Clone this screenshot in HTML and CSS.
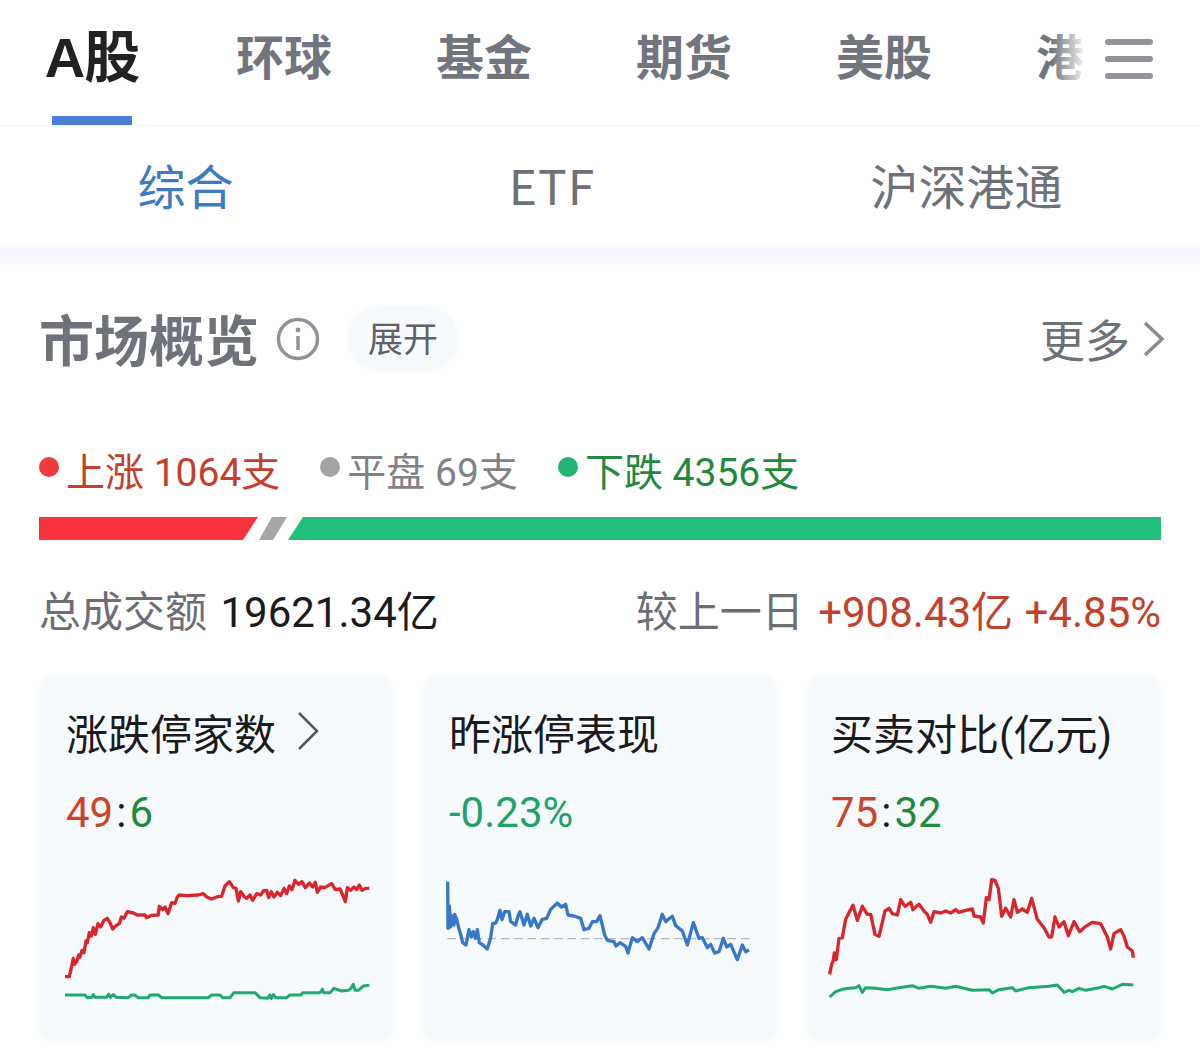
FILE: index.html
```html
<!DOCTYPE html>
<html lang="zh-CN">
<head>
<meta charset="utf-8">
<title>市场概览</title>
<link rel="stylesheet" href="styles.css">
</head>
<body>
<header class="topbar">
  <nav class="tabs">
    <span class="tab tab-active">A股</span>
    <span class="tab">环球</span>
    <span class="tab">基金</span>
    <span class="tab">期货</span>
    <span class="tab">美股</span>
    <span class="tab">港股</span>
  </nav>
  <div class="menu-wrap">
    <svg class="menu-icon" viewBox="0 0 48 40" aria-hidden="true"><rect y="0" width="48" height="6" rx="3"/><rect y="17" width="48" height="6" rx="3"/><rect y="34" width="48" height="6" rx="3"/></svg>
  </div>
</header>
<nav class="subtabs">
  <span class="subtab subtab-active">综合</span>
  <span class="subtab subtab-latin">ETF</span>
  <span class="subtab">沪深港通</span>
</nav>
<div class="band"></div>
<main class="overview">
  <div class="title-row">
    <h1 class="title">市场概览</h1>
    <svg class="info" viewBox="0 0 44 44" aria-hidden="true"><circle cx="22" cy="22" r="19.5"/><circle class="info-dot" cx="22" cy="13" r="2.4"/><path d="M22 19v14"/></svg>
    <span class="pill">展开</span>
    <span class="more">更多<svg class="more-arrow" viewBox="0 0 22 36" aria-hidden="true"><path d="M2 2l17 16L2 34"/></svg></span>
  </div>
  <div class="legend">
    <span class="legend-item up"><i class="dot"></i>上涨 1064支</span>
    <span class="legend-item flat"><i class="dot"></i>平盘 69支</span>
    <span class="legend-item down"><i class="dot"></i>下跌 4356支</span>
  </div>
  <svg class="ratio" viewBox="0 0 1122 23" aria-hidden="true">
    <polygon class="r" points="0,0 219,0 204,23 0,23"/>
    <polygon class="g" points="233,0 248,0 234,23 220,23"/>
    <polygon class="d" points="264,0 1122,0 1122,23 249,23"/>
  </svg>
  <div class="stats">
    <span class="stat-left"><span class="muted">总成交额</span> <span class="amount">19621.34亿</span></span>
    <span class="stat-right"><span class="muted">较上一日</span> <span class="delta">+908.43亿 +4.85%</span></span>
  </div>
  <section class="cards">
    <article class="card card-a">
      <h2 class="card-title">涨跌停家数<svg class="card-arrow" viewBox="0 0 22 40" aria-hidden="true"><path d="M2 2l18 18L2 38"/></svg></h2>
      <p class="card-value"><span class="v-up">49</span><span class="sep">:</span><span class="v-down">6</span></p>
      <svg class="chart" viewBox="90 600 960 420" aria-hidden="true">
        <polyline class="l-red" points="105,917 118,917 124,890 130,862 134,880 140,872 146,852 150,858 156,838 162,845 168,810 172,815 178,785 184,795 190,770 196,790 204,758 212,768 222,748 232,742 240,755 248,774 258,764 268,758 274,738 282,742 292,722 310,726 322,732 345,732 350,740 365,733 385,732 388,706 398,716 405,708 414,728 425,695 435,697 442,678 447,672 470,674 505,672 520,668 530,678 545,684 562,677 575,676 585,645 598,632 610,650 618,652 625,690 632,662 642,676 650,682 660,672 668,688 680,668 692,672 700,660 710,658 716,680 724,662 732,678 742,664 752,674 762,652 770,668 778,645 786,656 795,628 806,640 816,632 826,650 838,636 848,648 856,634 862,664 872,648 884,650 905,638 916,656 930,654 938,672 946,692 952,650 962,658 972,648 980,656 988,642 996,658 1006,652 1018,652"/>
        <polyline class="l-green" points="105,972 165,972 172,980 185,979 190,971 195,979 230,979 236,969 241,979 250,971 258,979 295,980 305,972 314,972 325,980 355,980 360,972 385,972 395,980 535,980 545,972 570,972 578,980 600,980 612,965 675,965 690,980 714,982 719,972 724,982 730,971 737,980 770,980 780,972 812,972 818,965 870,965 877,955 881,965 900,965 912,952 935,960 955,958 963,952 970,940 975,958 985,958 1000,945 1018,943"/>
      </svg>
    </article>
    <article class="card card-b">
      <h2 class="card-title">昨涨停表现</h2>
      <p class="card-value"><span class="v-pct">-0.23%</span></p>
      <svg class="chart" viewBox="90 600 960 420" aria-hidden="true">
        <line class="l-dash" x1="100" y1="803" x2="1010" y2="803"/>
        <polyline class="l-blue" points="101,632 102,772 106,705 110,768 114,735 120,762 122,730 128,745 134,770 140,790 146,815 156,822 165,776 172,798 178,782 184,802 190,776 196,815 204,820 220,834 230,800 236,758 245,756 250,745 258,718 264,746 272,722 285,722 290,752 305,762 312,735 318,722 330,762 340,730 350,765 360,742 372,770 385,745 398,742 410,715 430,696 442,708 455,700 462,732 480,735 500,742 510,776 525,772 535,752 548,752 558,734 572,792 580,808 600,812 606,825 618,815 635,826 642,846 655,800 670,812 685,800 705,834 720,788 732,770 745,730 755,752 764,744 775,736 785,764 805,780 820,822 838,755 855,802 865,800 880,830 890,820 902,846 915,842 928,802 938,828 950,820 970,866 985,822 995,842 1005,837"/>
      </svg>
    </article>
    <article class="card card-c">
      <h2 class="card-title">买卖对比(亿元)</h2>
      <p class="card-value"><span class="v-up">75</span><span class="sep">:</span><span class="v-down">32</span></p>
      <svg class="chart" viewBox="75 600 960 420" aria-hidden="true">
        <polyline class="l-red" points="92,910 98,880 103,868 106,846 112,866 120,802 130,800 140,745 150,725 162,703 175,748 190,706 205,730 215,730 228,790 240,796 258,720 270,712 280,728 295,732 305,686 318,706 335,694 342,716 352,706 360,700 375,720 385,730 395,754 405,722 425,726 440,720 455,726 470,716 480,724 500,718 520,714 525,735 545,738 553,756 562,680 570,686 578,626 588,628 598,652 608,736 620,712 635,738 645,686 655,724 670,714 685,724 698,682 715,745 735,770 750,798 758,798 768,738 780,768 795,752 808,794 825,752 842,782 860,766 880,754 905,758 925,798 935,834 945,788 965,776 975,796 985,828 1000,840 1003,860"/>
        <polyline class="l-green" points="92,978 110,962 130,955 150,952 170,950 180,944 190,964 200,950 230,952 265,956 300,950 340,944 360,952 395,946 440,952 470,946 520,958 570,956 580,966 600,956 640,950 650,960 690,950 750,946 775,942 795,964 810,958 820,962 840,952 860,958 900,950 915,946 940,954 970,940 1003,942"/>
      </svg>
    </article>
  </section>
</main>
</body>
</html>
```
FILE: styles.css
```css
* { box-sizing: border-box; }
html, body { margin: 0; padding: 0; }
body {
  width: 1200px;
  height: 1062px;
  overflow: hidden;
  background: #fff;
  font-family: Roboto, "Noto Sans CJK SC", sans-serif;
}
.topbar {
  position: relative;
  height: 127px;
  overflow: hidden;
  border-bottom: 2px solid #f9fafb;
}
.tabs {
  display: flex;
  height: 100%;
  white-space: nowrap;
}
.tab {
  flex: 0 0 200px;
  height: 115px;
  line-height: 108px;
  text-align: center;
  font-size: 48px;
  font-weight: 700;
  color: #73757e;
  font-family: "Noto Sans CJK SC", sans-serif;
}
.tab-active {
  position: relative;
  flex-basis: 184px;
  font-size: 56px;
  line-height: 116px;
  letter-spacing: -1px;
  color: #222;
  font-family: "Liberation Sans", "Noto Sans CJK SC", sans-serif;
}
.tab-active::after {
  content: "";
  position: absolute;
  left: 52px;
  top: 116px;
  width: 80px;
  height: 10px;
  background: #4a7fd6;
}
.menu-wrap {
  position: absolute;
  top: 0;
  right: 0;
  bottom: 2px;
  width: 148px;
  display: flex;
  align-items: flex-start;
  justify-content: flex-end;
  padding: 39px 47px 0 0;
  background: linear-gradient(90deg, rgba(255,255,255,0) 0, #fff 36px);
}
.menu-icon { width: 48px; height: 40px; fill: #92939d; }
.subtabs {
  display: flex;
  justify-content: space-around;
  align-items: center;
  height: 118px;
  padding-bottom: 5px;
}
.subtab {
  font-size: 48px;
  line-height: 60px;
  color: #6f7178;
  font-family: "Noto Sans CJK SC", sans-serif;
  font-weight: 400;
}
.subtab-active { color: #3f7bc0; }
.subtab-latin { letter-spacing: 1px; }
.band {
  height: 20px;
  background: linear-gradient(180deg, #fbfcfe 0, #f5f9fd 35%, #f6f9fd 85%, #fcfdfe 100%);
}
.overview { padding: 0 39px; }
.title-row {
  display: flex;
  align-items: center;
  height: 150px;
  padding-bottom: 2px;
}
.title {
  margin: 0;
  font-size: 55px;
  line-height: 144px;
  height: 144px;
  margin-top: -4px;
  font-weight: 700;
  color: #6f727b;
  font-family: "Noto Sans CJK SC", sans-serif;
}
.info {
  width: 44px;
  height: 44px;
  margin-left: 17px;
  fill: none;
  stroke: #8f9299;
  stroke-width: 3.5;
}
.info-dot { fill: #8f9299; stroke: none; }
.pill {
  margin-left: 28px;
  width: 110px;
  height: 64px;
  border-radius: 32px;
  background: #f6fafd;
  box-shadow: 0 0 6px #f6fafd;
  font-size: 35px;
  line-height: 60px;
  text-align: center;
  color: #5f6167;
  font-family: "Noto Sans CJK SC", sans-serif;
  font-weight: 400;
}
.more {
  margin-left: auto;
  display: flex;
  align-items: center;
  gap: 13px;
  font-size: 45px;
  line-height: 60px;
  color: #6f7178;
  font-family: "Noto Sans CJK SC", sans-serif;
  font-weight: 400;
  margin-right: -4px;
}
.more-arrow {
  width: 22px;
  height: 36px;
  fill: none;
  stroke: #8a8c93;
  stroke-width: 3.5;
}
.legend {
  display: flex;
  align-items: center;
  height: 56px;
  margin-top: 26px;
  font-size: 39px;
  font-weight: 400;
}
.legend-item {
  display: flex;
  align-items: center;
  gap: 7px;
  margin-right: 40px;
}
.dot {
  flex: none;
  width: 20px;
  height: 20px;
  border-radius: 50%;
  background: currentColor;
  margin-top: -4px;
}
.up { color: #c4402a; }
.up .dot { background: #f03a3f; }
.flat { color: #808287; }
.flat .dot { background: #a3a3a5; }
.down { color: #1f8a3c; }
.down .dot { background: #22b573; }
.ratio {
  display: block;
  width: 1122px;
  height: 23px;
  margin-top: 20px;
}
.ratio .r { fill: #f9333e; }
.ratio .g { fill: #a6a6a6; }
.ratio .d { fill: #22bf7c; }
.stats {
  display: flex;
  justify-content: space-between;
  align-items: center;
  height: 60px;
  margin-top: 38px;
  font-size: 42px;
  font-family: Roboto, "Noto Sans CJK SC", sans-serif;
}
.stat-left .amount { margin-left: 3px; }
.muted { color: #6c6e74; font-weight: 400; }
.amount { color: #1b1b1d; }
.delta { color: #c4402a; margin-left: 4px; word-spacing: 1px; }
.cards {
  display: grid;
  grid-template-columns: repeat(3, 352px);
  gap: 32px;
  margin-top: 39px;
  margin-left: 1px;
}
.card {
  height: 364px;
  padding: 25px 0 0 26px;
  border-radius: 12px;
  background: #f6fafd;
  box-shadow: 0 0 8px #f6fafd;
}
.card-b { padding-left: 25px; }
.card-c { padding-left: 23px; }
.card-title {
  display: flex;
  align-items: center;
  margin: 0;
  height: 58px;
  font-size: 42px;
  font-weight: 400;
  color: #1b1b1d;
  white-space: nowrap;
}
.card-arrow {
  width: 22px;
  height: 40px;
  margin-left: 21px;
  fill: none;
  stroke: #55575c;
  stroke-width: 2.5;
}
.card-value {
  margin: 25px 0 0;
  height: 56px;
  font-size: 42px;
  line-height: 56px;
}
.v-up { color: #c9452c; }
.v-down { color: #1f8a3c; }
.v-pct { color: #1fa268; }
.sep { color: #1b1b1d; margin: 0 3px; }
.chart {
  display: block;
  width: 320px;
  height: 140px;
  margin: 30px 0 0 -6px;
  fill: none;
  stroke-linejoin: round;
}
.card-b .chart { margin-left: -5px; }
.card-c .chart { margin-left: -7px; }
.l-red { stroke: #d9262c; stroke-width: 10; }
.l-green { stroke: #1ea970; stroke-width: 9; }
.l-blue { stroke: #3877c8; stroke-width: 10; }
.l-dash { stroke: #b5b8bd; stroke-width: 4; stroke-dasharray: 26 14; }
```
